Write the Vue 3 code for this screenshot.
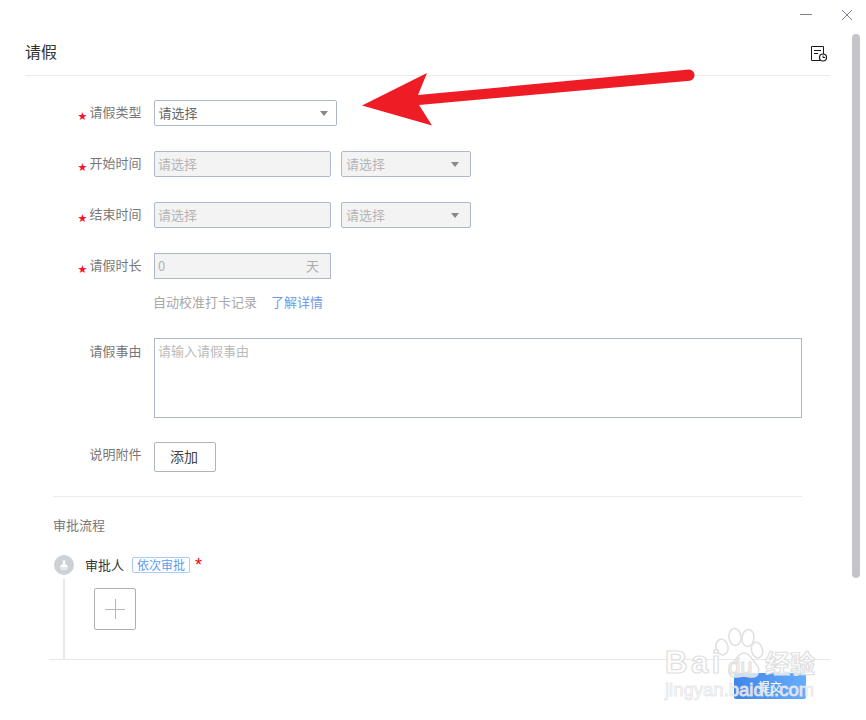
<script setup>
const rows = [
  { label: '开始时间' },
  { label: '结束时间' },
]
</script>

<template>
  <div class="page">
    <div class="winbar">
      <span class="win-min"></span>
      <svg class="win-close" width="12" height="12" viewBox="0 0 12 12"><path d="M1 1L11 11M11 1L1 11" stroke="#7b8290" stroke-width="1" fill="none"/></svg>
    </div>
    <header class="head">
      <span class="title">请假</span>
      <svg class="doc" width="18" height="17" viewBox="0 0 18 17" fill="none" stroke="#1a1a1a" stroke-width="1">
        <path d="M10.5 14.5H1.5V0.5H13.5V8"/>
        <path d="M4 4.5H11M4 7.5H8"/>
        <circle cx="13" cy="11.5" r="3.5" stroke-width="1.2"/>
        <path d="M13 9.5V11.5H15"/>
      </svg>
    </header>

    <main class="form">
      <div class="row">
        <label class="label"><i class="star">★</i>请假类型</label>
        <div class="select wide"><span>请选择</span><b class="caret"></b></div>
      </div>
      <div v-for="r in rows" :key="r.label" class="row">
        <label class="label"><i class="star">★</i>{{ r.label }}</label>
        <div class="field off date"><span>请选择</span></div>
        <div class="select off time"><span>请选择</span><b class="caret"></b></div>
      </div>
      <div class="row">
        <label class="label"><i class="star">★</i>请假时长</label>
        <div class="field off date square"><span>0</span><em>天</em></div>
      </div>
      <div class="hint"><span>自动校准打卡记录</span><a>了解详情</a></div>
      <div class="row top reason">
        <label class="label">请假事由</label>
        <div class="area">请输入请假事由</div>
      </div>
      <div class="row top attach">
        <label class="label">说明附件</label>
        <button class="add">添加</button>
      </div>
    </main>

    <section class="flow">
      <h3>审批流程</h3>
      <div class="approver">
        <span class="stamp">
          <svg width="20" height="20" viewBox="0 0 20 20">
            <circle cx="10" cy="10" r="10" fill="#ccd1d6"/>
            <path d="M8.8 5.5h2.4v3.6l2.6 2v1.4H6.2v-1.4l2.6-2zM6.5 13.5h7v1h-7z" fill="#fff"/>
          </svg>
        </span>
        <span class="who">审批人</span>
        <span class="tag">依次审批</span>
        <i class="req">*</i>
      </div>
      <div class="track">
        <button class="plus" aria-label="添加审批人"></button>
      </div>
    </section>

    <footer class="foot">
      <button class="submit">提交</button>
    </footer>

    <div class="scrollbar"></div>

    <svg class="arrow" width="350" height="70" viewBox="0 0 350 70">
      <path d="M12 45.5L77 13L68 35L339 9.6A5.6 5.6 0 0 1 340 20.7L69 45L82 65.5Z" fill="#ee1c25"/>
    </svg>

    <div class="mark">
      <svg class="paw" width="50" height="54" viewBox="0 0 50 54" fill="rgba(255,255,255,.7)" stroke="#e0e0e0" stroke-width="1.6">
        <ellipse cx="8" cy="21" rx="6" ry="8" transform="rotate(-12 8 21)"/>
        <ellipse cx="21" cy="11" rx="6" ry="8.5" transform="rotate(-6 21 11)"/>
        <ellipse cx="34" cy="12" rx="6" ry="8.5" transform="rotate(6 34 12)"/>
        <ellipse cx="43" cy="24" rx="5.5" ry="8" transform="rotate(-14 43 24)"/>
        <path d="M30 27C36 27 38 34 42 38C47 43 45 51 38 51C34 51 33 50 30 50C27 50 25 51 21 51C14 51 13 43 18 38C22 34 24 27 30 27Z"/>
      </svg>
      <span class="bai">Bai</span>
      <span class="du">du</span>
      <span class="jy">经验</span>
      <span class="url">jingyan.baidu.com</span>
    </div>
  </div>
</template>

<style>
html, body { margin: 0; background: #fff; }
</style>

<style scoped>
.page {
  position: relative;
  width: 866px;
  height: 720px;
  overflow: hidden;
  background: #fff;
  font-family: "Noto Sans CJK SC", "Liberation Sans", sans-serif;
  font-size: 13px;
  color: #666;
}
.winbar {
  height: 34px;
  display: flex;
  justify-content: flex-end;
  align-items: flex-start;
  padding-right: 13px;
  gap: 29px;
  box-sizing: border-box;
}
.win-min { width: 12px; height: 1px; background: #7b8290; margin-top: 14px; }
.win-close { margin-top: 9px; }
.head {
  height: 41px;
  margin: 0 36px 0 25px;
  border-bottom: 1px solid #ebebeb;
  display: flex;
  justify-content: space-between;
  align-items: flex-start;
}
.title { font-size: 16px; line-height: 24px; color: #333; margin-top: 5px; }
.doc { margin: 12px 2px 0 0; }
.form { padding-top: 24px; }
.row { display: flex; align-items: center; gap: 10px; height: 26px; margin-bottom: 25px; }
.row.top { align-items: flex-start; }
.label {
  width: 141.5px;
  flex: none;
  margin-right: 2.5px;
  text-align: right;
  line-height: 24px;
  height: 26px;
  color: #777;
  position: relative;
}
.row.top .label { line-height: 26px; }
.row.top.attach .label { line-height: 24px; }
.star {
  font-style: normal;
  color: #f0142f;
  font-family: "DejaVu Sans", sans-serif;
  font-size: 11px;
  line-height: 26px;
  position: absolute;
  left: 77.5px;
  top: 4px;
}
.select, .field {
  box-sizing: border-box;
  height: 26px;
  border: 1px solid #adb9cb;
  border-radius: 2px;
  display: flex;
  align-items: center;
  justify-content: space-between;
  line-height: 24px;
  padding: 0 4px;
}
.select { color: #666; }
.wide { width: 183px; padding-left: 4px; }
.wide span { margin-left: -.5px; }
.wide .caret { margin-right: 4px; }
.off { background: #f3f3f3; color: #b5b5b5; }
.date { width: 177px; padding-left: 3px; }
.time { width: 130px; padding-left: 4px; }
.time .caret { margin-right: 7px; }
.square { border-radius: 0; padding-left: 3px; padding-right: 11px; }
.square em { font-style: normal; color: #aaa; }
.caret {
  width: 0;
  height: 0;
  border-left: 4.5px solid transparent;
  border-right: 4.5px solid transparent;
  border-top: 5px solid #888;
}
.hint {
  margin: -12px 0 0 153px;
  height: 20px;
  line-height: 20px;
  color: #a8a8a8;
  display: flex;
  gap: 14px;
}
.hint a { color: #6f9be6; }
.reason { height: 80px; margin-top: 26px; margin-bottom: 24px; }
.area {
  box-sizing: border-box;
  width: 648px;
  height: 80px;
  border: 1px solid #adb9cb;
  padding: 2px 3px;
  line-height: 20px;
  color: #bbb;
}
.attach { height: 30px; margin-bottom: 24px; }
.add {
  box-sizing: border-box;
  width: 62px;
  height: 30px;
  background: #fff;
  border: 1px solid #adb4bd;
  border-radius: 2px;
  font: inherit;
  font-size: 14px;
  color: #444;
  padding: 0 2px 2px 0;
}
.flow { margin: 0 64px 0 53px; border-top: 1px solid #ebebeb; height: 162px; position: relative; }
.flow h3 { margin: 18px 0 0; font-weight: 400; font-size: 13px; line-height: 20px; color: #777; }
.approver { display: flex; align-items: center; height: 20px; margin: 20px 0 0 1px; }
.stamp { width: 20px; height: 20px; }
.stamp svg { display: block; }
.who { margin: -2px 0 0 11px; color: #333; }
.tag {
  box-sizing: border-box;
  height: 16px;
  margin-left: 8px;
  padding: 0 4px;
  border: 1px solid #a9cdf8;
  border-radius: 2px;
  font-size: 12px;
  line-height: 14px;
  color: #5a9bf0;
}
.req {
  font-style: normal;
  font-family: "Liberation Sans", sans-serif;
  font-size: 18px;
  line-height: 20px;
  color: #f00;
  margin-left: 5px;
}
.track {
  margin: 4px 0 0 10px;
  height: 80px;
  border-left: 2px solid #e8e9ee;
  padding: 9px 0 0 29px;
  box-sizing: border-box;
}
.plus {
  display: block;
  box-sizing: border-box;
  width: 42px;
  height: 42px;
  padding: 0;
  background:
    linear-gradient(#b5b5b5, #b5b5b5) center / 20px 1px no-repeat,
    linear-gradient(#b5b5b5, #b5b5b5) center / 1px 20px no-repeat,
    #fff;
  border: 1px solid #b0b0b0;
  border-radius: 2px;
}
.foot {
  margin: 0 36px 0 49px;
  border-top: 1px solid #e8e8e8;
  display: flex;
  justify-content: flex-end;
  padding: 13px 24px 0 0;
}
.submit {
  width: 72px;
  height: 26px;
  border: 0;
  border-radius: 2px;
  padding: 0;
  font: inherit;
  font-size: 12px;
  color: #fff;
  background: linear-gradient(90deg, #3f85ea, #66aefc);
}
.scrollbar {
  position: absolute;
  left: 852px;
  top: 34px;
  width: 8px;
  height: 544px;
  border-radius: 4px;
  background: #c4c5ca;
}
.arrow { position: absolute; left: 350px; top: 60px; }
.mark { position: absolute; left: 664px; top: 626px; width: 170px; height: 80px; pointer-events: none; }
.paw { position: absolute; left: 50px; top: 0; }
.bai, .du, .jy, .url {
  position: absolute;
  font-family: "Liberation Sans", sans-serif;
  font-weight: 700;
  color: rgba(255, 255, 255, .75);
  -webkit-text-stroke: 1.2px #e0e0e0;
  white-space: nowrap;
}
.bai { left: 1px; top: 18px; font-size: 31px; line-height: 38px; letter-spacing: 3.5px; }
.du { left: 64px; top: 29px; font-size: 22px; line-height: 24px; font-weight: 400; }
.jy { left: 101px; top: 21px; font-size: 25px; line-height: 30px; font-family: "Noto Sans CJK SC", sans-serif; }
.url { left: 1px; top: 52px; font-size: 18.5px; line-height: 24px; font-weight: 400; -webkit-text-stroke: 1px rgba(228, 228, 228, .85); }
</style>
